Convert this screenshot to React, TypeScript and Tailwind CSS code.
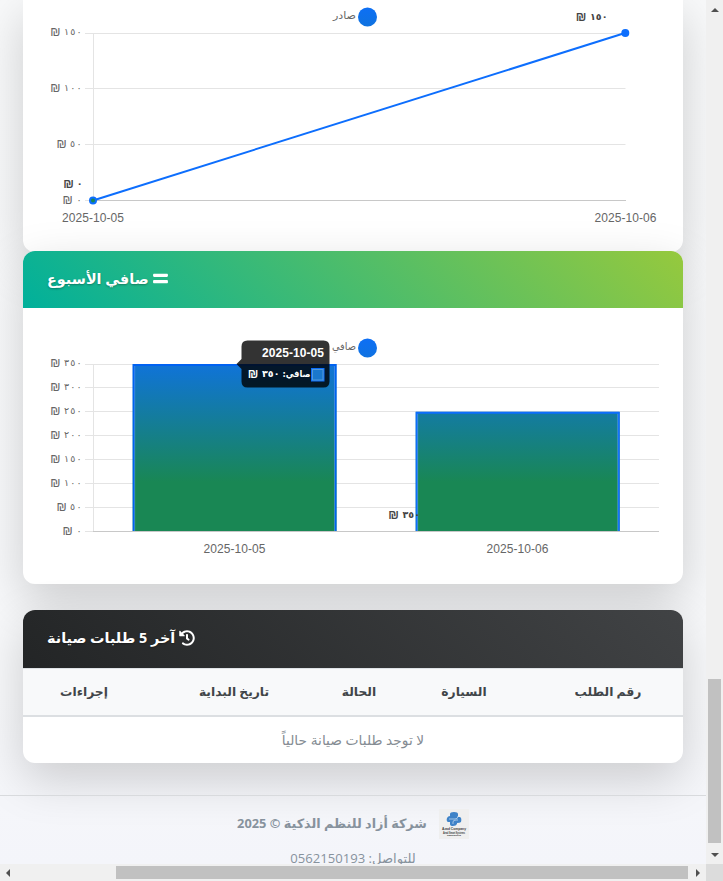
import type { ReactNode } from 'react';
import { FaEquals, FaHistory } from 'react-icons/fa';

const ARABIC = "font-['Open_Sans','DejaVu_Sans',sans-serif]";
const DIGITS = "font-['DejaVu_Sans',sans-serif]";
const LATIN = "font-['Liberation_Sans',Arial,sans-serif]";

type MoneyProps = { x: number; y: number; value: string; bold?: boolean; fill?: string };

/* Shekel amount with Arabic-Indic digits, right aligned on x */
function Money({ x, y, value, bold, fill = '#666' }: MoneyProps) {
  const width = value.length * 6.2;
  return (
    <g fill={fill} fontWeight={bold ? 700 : 400}>
      <text x={x - width - 2} y={y} textAnchor="end" fontSize="12" className={LATIN}>₪</text>
      <text x={x + 0.5} y={y - 1.5} textAnchor="end" fontSize="9.5" textLength={width - 1} direction="ltr" className={DIGITS}>{value}</text>
    </g>
  );
}

function DateLabel({ x, y, children }: { x: number; y: number; children: string }) {
  return (
    <text x={x} y={y} textAnchor="middle" fontSize="12" fill="#666" textLength="62" className={LATIN}>{children}</text>
  );
}

function LineChart() {
  return (
    <svg width="660" height="252" viewBox="23 0 660 252" className="block" direction="ltr">
      <defs>
        <linearGradient id="lineFill" gradientUnits="userSpaceOnUse" x1="0" y1="0" x2="0" y2="150">
          <stop offset="0" stopColor="#0d6efd" />
          <stop offset="1" stopColor="#198754" />
        </linearGradient>
      </defs>
      <circle cx="367.5" cy="17" r="9.5" fill="url(#lineFill)" />
      <text x="333" y="19" fontSize="10" fill="#666" textLength="23" lengthAdjust="spacingAndGlyphs" className={DIGITS}>صادر</text>
      <path d="M85 33.5H625.5M85 88.5H625.5M85 144.5H625.5M93.5 33V200" stroke="#e4e4e4" fill="none" />
      <path d="M85 200.5H93" stroke="#e4e4e4" />
      <path d="M93 200.5H626" stroke="#c8c8c8" />
      <path d="M93 200.5L625 33" stroke="#0d6efd" strokeWidth="2" />
      <circle cx="93" cy="200.5" r="3" fill="url(#lineFill)" stroke="#0d6efd" strokeWidth="2" />
      <circle cx="625.3" cy="33" r="4" fill="#0d6efd" />
      <Money x={81} y={36} value="١٥٠" />
      <Money x={81} y={92} value="١٠٠" />
      <Money x={81} y={148} value="٥٠" />
      <Money x={82} y={188} value="٠" bold fill="#444" />
      <Money x={81} y={204} value="٠" />
      <Money x={607} y={21} value="١٥٠" bold fill="#444" />
      <DateLabel x={93} y={222}>2025-10-05</DateLabel>
      <DateLabel x={625.5} y={222}>2025-10-06</DateLabel>
    </svg>
  );
}

const TICKS = [
  { line: 364.5, y: 367, value: '٣٥٠' },
  { line: 387.5, y: 391, value: '٣٠٠' },
  { line: 411.5, y: 415, value: '٢٥٠' },
  { line: 435.5, y: 439, value: '٢٠٠' },
  { line: 459.5, y: 463, value: '١٥٠' },
  { line: 483.5, y: 487, value: '١٠٠' },
  { line: 507.5, y: 511, value: '٥٠' },
  { line: 531.5, y: 535, value: '٠' },
];

function Bar({ x, y, width, stroke }: { x: number; y: number; width: number; stroke: string }) {
  const bottom = 531;
  return (
    <g fill="none">
      <rect x={x} y={y} width={width} height={bottom - y} fill="url(#barFill)" />
      <path d={`M${x + 1} ${bottom}V${y + 1}H${x + width - 1}V${bottom}`} stroke={stroke} strokeWidth="2" />
      <path d={`M${x + 2} ${bottom}V${y + 2}M${x + width - 2} ${bottom}V${y + 2}`} stroke="#fff" strokeOpacity="0.2" strokeWidth="1" />
    </g>
  );
}

function BarChart() {
  return (
    <svg width="660" height="276" viewBox="23 308 660 276" className="block" direction="ltr">
      <defs>
        <linearGradient id="barFill" gradientUnits="userSpaceOnUse" x1="0" y1="332" x2="0" y2="482">
          <stop offset="0" stopColor="#0d6efd" />
          <stop offset="1" stopColor="#198754" />
        </linearGradient>
      </defs>
      <circle cx="367.5" cy="348" r="9.5" fill="url(#barFill)" />
      <text x="332" y="350" fontSize="10" fill="#666" textLength="24" lengthAdjust="spacingAndGlyphs" className={DIGITS}>صافي</text>
      {TICKS.map((t) => (
        <g key={t.line}>
          <path d={`M85 ${t.line}H659`} stroke="#e4e4e4" />
          <Money x={81} y={t.y} value={t.value} />
        </g>
      ))}
      <path d="M93.5 364V531" stroke="#e4e4e4" />
      <path d="M93 531.5H659" stroke="#c8c8c8" />
      <Bar x={132.7} y={364} width={203.8} stroke="#0062f2" />
      <Bar x={415.7} y={411.8} width={204} stroke="#0d6efd" />
      <Money x={419.5} y={519} value="٣٥٠" bold fill="#444" />
      <DateLabel x={234.5} y={553}>2025-10-05</DateLabel>
      <DateLabel x={517.5} y={553}>2025-10-06</DateLabel>
      <path d="M247.5 340.5H323.5Q329.5 340.5 329.5 346.5V381.5Q329.5 387.5 323.5 387.5H247.5Q241.5 387.5 241.5 381.5V369L236.5 364L241.5 359V346.5Q241.5 340.5 247.5 340.5Z" fill="#000" fillOpacity="0.8" />
      <text x="324" y="357" textAnchor="end" fontSize="12" fontWeight="700" fill="#fff" textLength="62" className={LATIN}>2025-10-05</text>
      <rect x="311.5" y="368.5" width="12.5" height="12.5" fill="#1a78cc" stroke="#0d6efd" />
      <rect x="312.5" y="369.5" width="10.5" height="10.5" fill="none" stroke="#fff" strokeOpacity="0.25" />
      <text x="282.5" y="377" fontSize="9.5" fontWeight="700" fill="#fff" textLength="28" lengthAdjust="spacingAndGlyphs" direction="rtl" textAnchor="end" className={DIGITS}>صافي:</text>
      <Money x={279} y={378} value="٣٥٠" bold fill="#fff" />
    </svg>
  );
}

function CardHeader({ className, children }: { className: string; children: ReactNode }) {
  return (
    <div dir="rtl" className={`flex items-center justify-end gap-1 rounded-t-xl px-6 pb-0.5 font-bold text-white [text-shadow:0_1px_2px_rgba(0,0,0,0.3)] ${className}`}>
      {children}
    </div>
  );
}

const CARD_SHADOW = 'shadow-[0_16px_48px_rgba(0,0,0,0.175)]';

const COLUMNS = [
  { label: 'رقم الطلب', width: 'w-[150px]' },
  { label: 'السيارة', width: 'w-[138px]' },
  { label: 'الحالة', width: 'w-[72px]' },
  { label: 'تاريخ البداية', width: 'w-[178px]' },
  { label: 'إجراءات', width: 'w-[122px]' },
];

function Logo() {
  return (
    <svg width="30" height="30" viewBox="0 0 30 30" direction="ltr">
      <rect width="30" height="30" fill="#efefef" />
      <path d="M11 5q0-2 4-2t4 2v3h2q2 1 1 5q-1 1-4 1v1q-1 2-4 2t-3-2v-2h-2q-2-1-1-4q1-2 3-2z" fill="#3f83c8" />
      <path d="M10 10h6q3 0 3-3M14 15v-2q0-2 3-2h2" stroke="#bcd5ed" strokeWidth="0.8" fill="none" />
      <g fill="#3c3c3c" fontWeight="700" textAnchor="middle" className={LATIN}>
        <text x="15" y="21" fontSize="3.8" textLength="24" lengthAdjust="spacingAndGlyphs">Azad Company</text>
        <text x="15" y="24.5" fontSize="3" textLength="22" lengthAdjust="spacingAndGlyphs">Azad Smart Systems</text>
        <text x="15" y="27.3" fontSize="2.5" textLength="14" lengthAdjust="spacingAndGlyphs">0562150193</text>
      </g>
    </svg>
  );
}

function Arrow({ d }: { d: string }) {
  return (
    <svg width="8" height="8" viewBox="0 0 8 8" className="shrink-0">
      <path d={d} fill="#505050" />
    </svg>
  );
}

export default function App() {
  return (
    <div className={`flex h-[881px] w-[723px] flex-col overflow-hidden bg-[#f0f0f0] ${ARABIC}`}>
      <div className="flex h-[864px]">
        <main className="h-[864px] w-[706px] overflow-hidden bg-linear-to-b from-[#f8f9fa] via-[#f7f8fa] via-80% to-[#f4f5fa]">
          <div className="mx-[23px] w-[660px]">
            <section className={`h-[252px] rounded-b-xl bg-white ${CARD_SHADOW}`}>
              <LineChart />
            </section>
            <section className={`-mt-px rounded-xl bg-white ${CARD_SHADOW}`}>
              <CardHeader className="h-[57px] bg-linear-[45deg,#00b09b,#96c93d] text-[14.4px]">
                <FaEquals className="h-[17px] w-[15px]" />
                <h5>صافي الأسبوع</h5>
              </CardHeader>
              <BarChart />
            </section>
            <section className={`mt-[26px] h-[153px] rounded-xl bg-white ${CARD_SHADOW}`}>
              <CardHeader className="h-[58px] bg-linear-[45deg,#232526,#414345] text-[14.4px]">
                <FaHistory className="size-4" />
                <h5>آخر 5 طلبات صيانة</h5>
              </CardHeader>
              <div dir="rtl" className="flex h-[49px] items-center border-t border-b-2 border-t-[#dee2e6] border-b-[#dcdfe2] bg-[#f8f9fa] text-[12.3px] font-bold text-[#414549]">
                {COLUMNS.map((c) => (
                  <div key={c.label} className={`text-center whitespace-nowrap ${c.width}`}>{c.label}</div>
                ))}
              </div>
              <p dir="rtl" className="flex h-[46px] items-center justify-center text-[13.8px] text-[#858c93]">لا توجد طلبات صيانة حالياً</p>
            </section>
          </div>
          <footer dir="rtl" className="mt-8 border-t border-[#d8dadd] pt-[13px] text-[#87929d]">
            <div className="flex items-center justify-center gap-3 text-[12.8px] font-bold">
              <Logo />
              <span>شركة أزاد للنظم الذكية © 2025</span>
            </div>
            <p className="mt-[9px] text-center text-[13.1px] leading-5">للتواصل: 0562150193</p>
          </footer>
        </main>
        <aside className="flex w-[17px] flex-col items-center pt-1.5">
          <Arrow d="M0 6L4 2L8 6Z" />
          <div className="mt-[665px] h-[164px] w-[13px] bg-[#c1c1c1]" />
          <div className="mt-2"><Arrow d="M0 2L4 6L8 2Z" /></div>
        </aside>
      </div>
      <div className="flex h-[17px] items-center">
        <div className="flex h-full w-[706px] items-center pl-1">
          <Arrow d="M6 0L2 4L6 8Z" />
          <div className="ml-[104px] h-[13px] w-[572px] bg-[#c1c1c1]" />
          <div className="ml-1.5"><Arrow d="M2 0L6 4L2 8Z" /></div>
        </div>
        <div className="h-full w-[17px] bg-[#dcdcdc]" />
      </div>
    </div>
  );
}
